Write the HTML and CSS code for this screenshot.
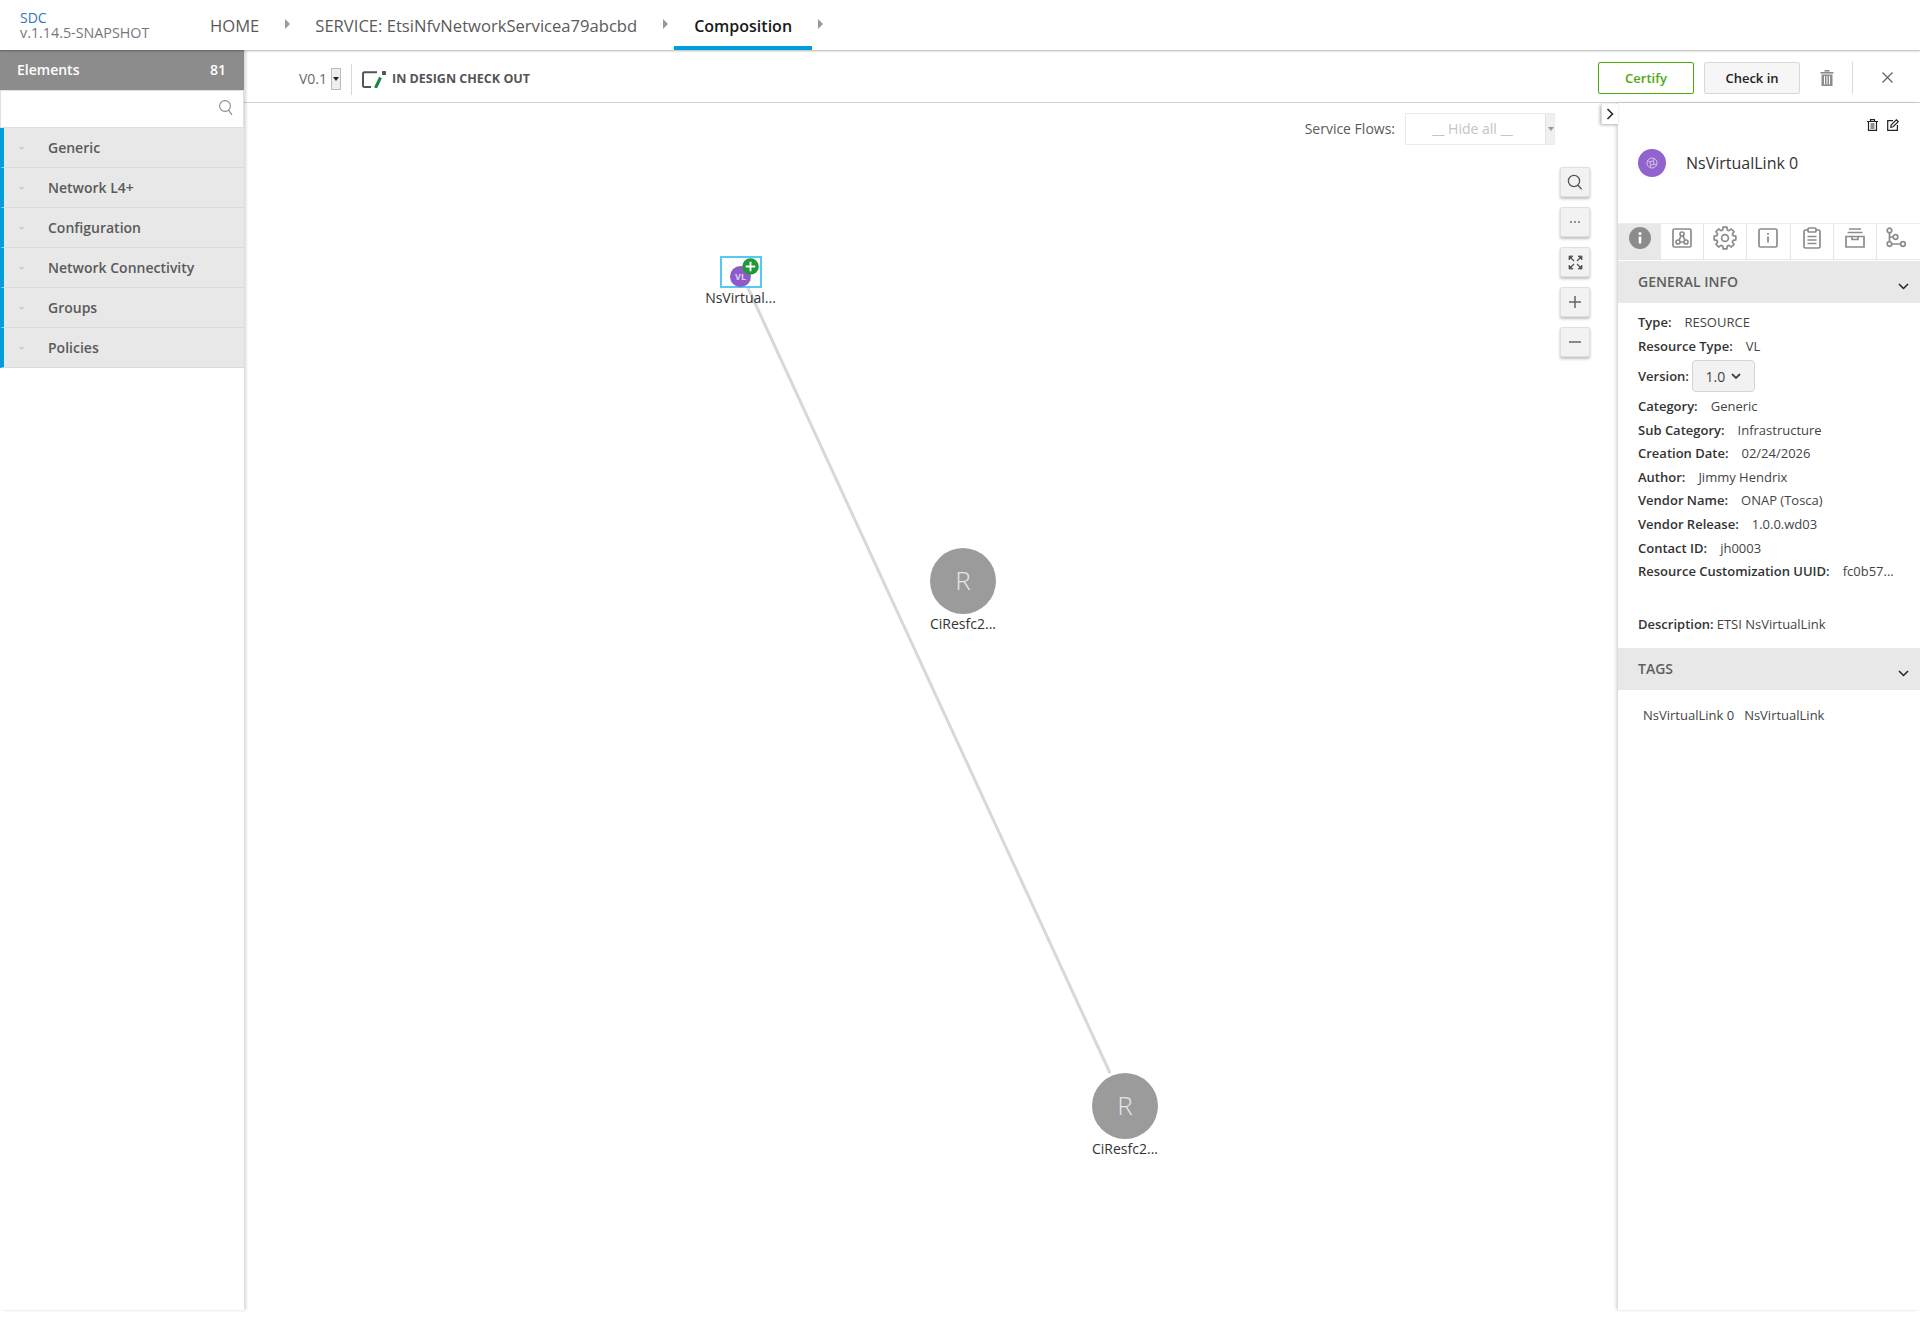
FILE: index.html
```html
<!DOCTYPE html>
<html lang="en">
<head>
    <meta charset="UTF-8">
    <title>SDC - Composition</title>
    <link rel="stylesheet" href="styles.css">
</head>
<body>

    <div class="top-bar">
        <div class="brand">
            <div class="brand-name">SDC</div>
            <div class="brand-version">v.1.14.5-SNAPSHOT</div>
        </div>
        <div class="crumb">HOME</div>
        <span class="crumb-arrow"></span>
        <div class="crumb crumb-service">SERVICE: EtsiNfvNetworkServicea79abcbd</div>
        <span class="crumb-arrow"></span>
        <div class="crumb crumb-active">Composition</div>
        <span class="crumb-arrow"></span>
    </div>

    <div class="main">
        <div class="palette">
            <div class="palette-head">
                <span>Elements</span>
                <span>81</span>
            </div>
            <div class="palette-search">
                <svg width="16" height="17" viewBox="0 0 16 17" fill="none" stroke="#8a8a8a" stroke-width="1.1"><circle cx="7" cy="7" r="5.4"/><path d="M10.6 11.2l3.4 4.6"/></svg>
            </div>
            <div class="group"><span class="group-mark"><svg width="5" height="4" viewBox="0 0 5 4" fill="none" stroke="#aaa"><path d="M.5 1l2 2 2-2"/></svg></span>Generic</div>
            <div class="group"><span class="group-mark"><svg width="5" height="4" viewBox="0 0 5 4" fill="none" stroke="#aaa"><path d="M.5 1l2 2 2-2"/></svg></span>Network L4+</div>
            <div class="group"><span class="group-mark"><svg width="5" height="4" viewBox="0 0 5 4" fill="none" stroke="#aaa"><path d="M.5 1l2 2 2-2"/></svg></span>Configuration</div>
            <div class="group"><span class="group-mark"><svg width="5" height="4" viewBox="0 0 5 4" fill="none" stroke="#aaa"><path d="M.5 1l2 2 2-2"/></svg></span>Network Connectivity</div>
            <div class="group"><span class="group-mark"><svg width="5" height="4" viewBox="0 0 5 4" fill="none" stroke="#aaa"><path d="M.5 1l2 2 2-2"/></svg></span>Groups</div>
            <div class="group"><span class="group-mark"><svg width="5" height="4" viewBox="0 0 5 4" fill="none" stroke="#aaa"><path d="M.5 1l2 2 2-2"/></svg></span>Policies</div>
        </div>

        <div class="workspace">
            <div class="toolbar">
                <div class="version">V0.1</div>
                <div class="mini-select"><span class="mini-caret"></span></div>
                <div class="toolbar-sep"></div>
                <svg class="state-icon" width="24" height="17" viewBox="0 0 24 17" fill="none">
                    <path d="M15 1.2H2.500a1.500 1.500 0 0 0-1.500 1.500v11.800a1.500 1.500 0 0 0 1.500 1.500H9" stroke="#555" stroke-width="2"/>
                    <path d="M18.500 6.500L13.500 17" stroke="#14883c" stroke-width="3"/>
                    <rect x="20" y="0" width="4" height="4" rx="0.500" fill="#555"/>
                </svg>
                <div class="state-text">IN DESIGN CHECK OUT</div>
                <div class="toolbar-right">
                    <button class="btn btn-certify">Certify</button>
                    <button class="btn btn-checkin">Check in</button>
                    <svg class="toolbar-trash" width="14" height="16" viewBox="0 0 14 16" fill="#8c8c8c"><rect x="0.500" y="2" width="13" height="1.600"/><rect x="4.500" y="0" width="5" height="1.600"/><path d="M1.500 4.500h11V16h-11zM4 6v8.500h1V6zm2.500 0v8.500h1V6zM9 6v8.500h1V6z" fill-rule="evenodd"/></svg>
                    <div class="toolbar-sep-right"></div>
                    <svg class="toolbar-close" width="11" height="11" viewBox="0 0 11 11" stroke="#666" stroke-width="1.300"><path d="M0.500 0.500l10 10M10.500 0.500l-10 10"/></svg>
                </div>
            </div>

            <div class="stage">
                <div class="canvas">
                    <svg class="links" width="1374" height="1206">
                        <line x1="504" y1="185" x2="866" y2="970" stroke="#d8d8d8" stroke-width="3"/>
                    </svg>

                    <div class="flows">
                        <span class="flows-label">Service Flows:</span>
                        <div class="flows-select">
                            <span class="flows-value">__ Hide all __</span>
                            <span class="flows-spin"></span>
                        </div>
                    </div>

                    <div class="zoom-tools">
                        <div class="zoom-btn"><svg width="16" height="17" viewBox="0 0 16 17" fill="none" stroke="#555" stroke-width="1.300"><circle cx="7" cy="7" r="5.600"/><path d="M11 11.300l3.600 4"/></svg></div>
                        <div class="zoom-btn"><svg width="12" height="4" viewBox="0 0 12 4" fill="#666"><circle cx="2" cy="2" r="0.900"/><circle cx="6" cy="2" r="0.900"/><circle cx="10" cy="2" r="0.900"/></svg></div>
                        <div class="zoom-btn"><svg width="15" height="15" viewBox="0 0 15 15" fill="#555" stroke="#555" stroke-width="1.300"><path d="M1 1h4L1 5zM14 1h-4l4 4zM1 14h4l-4-4zM14 14h-4l4-4z" stroke-width="0.800"/><path d="M2 2l4 4M13 2L9 6M2 13l4-4M13 13L9 9"/></svg></div>
                        <div class="zoom-btn"><svg width="14" height="14" viewBox="0 0 14 14" stroke="#666" stroke-width="1.500"><path d="M7 1v12M1 7h12"/></svg></div>
                        <div class="zoom-btn"><svg width="14" height="14" viewBox="0 0 14 14" stroke="#666" stroke-width="1.500"><path d="M1 7h12"/></svg></div>
                    </div>

                    <div class="node node-vl">
                        <div class="node-select"></div>
                        <div class="vl-dot">VL</div>
                        <svg class="vl-plus" width="17" height="17" viewBox="0 0 16 16"><circle cx="8" cy="8" r="7.800" fill="#1d9a35"/><path d="M8 3.500v9M3.500 8h9" stroke="#fff" stroke-width="1.800"/></svg>
                        <div class="node-label">NsVirtual...</div>
                    </div>
                    <div class="node node-r node-r1">
                        <div class="r-dot">R</div>
                        <div class="node-label">CiResfc2...</div>
                    </div>
                    <div class="node node-r node-r2">
                        <div class="r-dot">R</div>
                        <div class="node-label">CiResfc2...</div>
                    </div>
                </div>

                <div class="details">
                    <div class="details-toggle">
                        <svg width="8" height="12" viewBox="0 0 8 12" fill="none" stroke="#222" stroke-width="1.500"><path d="M1.500 1l5 5-5 5"/></svg>
                    </div>
                    <div class="details-actions">
                        <svg width="11" height="12" viewBox="0 0 11 12" fill="none" stroke="#222" stroke-width="1.200"><path d="M0 2.500h11M3.500 2V.7h4V2M1.500 2.500V11.400h8V2.500M3.500 5h4M3.500 7h4M3.500 9h4"/></svg>
                        <svg width="12" height="12" viewBox="0 0 12 12" fill="none" stroke="#222" stroke-width="1.200"><path d="M6 1.600H.7v9.700h9.700V6"/><path d="M3.800 8.200l.4-2.300L9.400.8l1.900 1.900-5.200 5.100z"/></svg>
                    </div>
                    <div class="details-title">
                        <div class="title-dot">
                            <svg width="16" height="16" viewBox="0 0 16 16" fill="none" stroke="#e0cdf0" stroke-width="0.900"><circle cx="8" cy="8" r="5"/><circle cx="8" cy="8" r="2"/><path d="M3.500 6l3 1M9.500 9l3 1M10 3.500L9 6.500M7 9.500l-1 3"/></svg>
                        </div>
                        <div class="title-text">NsVirtualLink 0</div>
                    </div>

                    <div class="tabs">
                        <div class="tab tab-active"><svg width="22" height="22" viewBox="0 0 22 22"><circle cx="11" cy="11" r="11" fill="#8c8c8c"/><rect x="9.700" y="9.500" width="2.600" height="7" fill="#fff"/><circle cx="11" cy="6.500" r="1.600" fill="#fff"/></svg></div>
                        <div class="tab"><svg width="20" height="20" viewBox="0 0 20 20" fill="none" stroke="#8c8c8c" stroke-width="1.700"><rect x="1" y="1" width="18" height="18" rx="1.500"/><circle cx="10" cy="6" r="2"/><circle cx="6" cy="14" r="2"/><circle cx="14" cy="14" r="2"/><path d="M9 8l-2 4.300M11 8l2 4.300M8 14h4"/></svg></div>
                        <div class="tab"><svg width="24" height="24" viewBox="0 0 24 24" fill="none" stroke="#8c8c8c" stroke-width="1.700" stroke-linejoin="round"><circle cx="12" cy="12" r="3.400"/><path d="M10.090 1.170L13.910 1.170L14.320 3.930L16.070 4.650L18.310 2.990L21.010 5.690L19.350 7.930L20.070 9.680L22.830 10.090L22.830 13.910L20.070 14.320L19.350 16.070L21.010 18.310L18.310 21.010L16.070 19.350L14.320 20.070L13.910 22.830L10.090 22.830L9.680 20.070L7.930 19.350L5.690 21.010L2.990 18.310L4.650 16.070L3.930 14.320L1.170 13.910L1.170 10.090L3.930 9.680L4.650 7.930L2.990 5.690L5.690 2.990L7.930 4.650L9.680 3.930Z"/></svg></div>
                        <div class="tab"><svg width="20" height="20" viewBox="0 0 20 20" fill="none" stroke="#8c8c8c" stroke-width="1.700"><rect x="1" y="1" width="18" height="18" rx="1.500"/><path d="M10 8.500v6" stroke-width="1.800"/><path d="M10 5v1.800" stroke-width="1.800"/></svg></div>
                        <div class="tab"><svg width="18" height="22" viewBox="0 0 18 22" fill="none" stroke="#8c8c8c" stroke-width="1.700"><path d="M5 3H2.500A1.500 1.500 0 0 0 1 4.500v15A1.500 1.500 0 0 0 2.500 21h13a1.500 1.500 0 0 0 1.500-1.500v-15A1.500 1.500 0 0 0 15.500 3H13"/><rect x="5" y="1" width="8" height="4" rx="1"/><path d="M4.500 9.500h9M4.500 13h9M4.500 16.500h9"/></svg></div>
                        <div class="tab"><svg width="20" height="20" viewBox="0 0 20 20" fill="none" stroke="#8c8c8c" stroke-width="1.700"><path d="M4 1h12M2.500 4.500h15"/><path d="M1 8.500h18v10.500H1zM7 8.500v3h6v-3"/></svg></div>
                        <div class="tab tab-last"><svg width="20" height="22" viewBox="0 0 20 22" fill="none" stroke="#8c8c8c" stroke-width="1.700"><circle cx="3.500" cy="3.500" r="2.300"/><circle cx="3.500" cy="17" r="2.300"/><circle cx="9.500" cy="10" r="2.300"/><circle cx="17" cy="17" r="2.300"/><path d="M3.500 6v8.700M3.500 10H7M6 17h8.700"/></svg></div>
                    </div>

                    <div class="section-head">
                        <span>GENERAL INFO</span>
                        <svg width="11" height="7" viewBox="0 0 11 7" fill="none" stroke="#222" stroke-width="1.500"><path d="M1 1l4.500 4.500L10 1"/></svg>
                    </div>
                    <div class="info">
                        <div class="info-row info-top"><b>Type:</b>RESOURCE</div>
                        <div class="info-row info-top"><b>Resource Type:</b>VL</div>
                        <div class="info-row info-version"><b>Version:</b>
                            <div class="version-select">1.0
                                <svg width="10" height="7" viewBox="0 0 10 7" fill="none" stroke="#444" stroke-width="1.800"><path d="M1 1l4 4 4-4"/></svg>
                            </div>
                        </div>
                        <div class="info-row"><b>Category:</b>Generic</div>
                        <div class="info-row"><b>Sub Category:</b>Infrastructure</div>
                        <div class="info-row"><b>Creation Date:</b>02/24/2026</div>
                        <div class="info-row"><b>Author:</b>Jimmy Hendrix</div>
                        <div class="info-row"><b>Vendor Name:</b>ONAP (Tosca)</div>
                        <div class="info-row"><b>Vendor Release:</b>1.0.0.wd03</div>
                        <div class="info-row"><b>Contact ID:</b>jh0003</div>
                        <div class="info-row"><b>Resource Customization UUID:</b>fc0b57...</div>
                        <div class="info-row info-desc"><b class="desc-label">Description:</b>ETSI NsVirtualLink</div>
                    </div>
                    <div class="section-head">
                        <span>TAGS</span>
                        <svg width="11" height="7" viewBox="0 0 11 7" fill="none" stroke="#222" stroke-width="1.500"><path d="M1 1l4.500 4.500L10 1"/></svg>
                    </div>
                    <div class="tag-list">
                        <span>NsVirtualLink 0</span>
                        <span>NsVirtualLink</span>
                    </div>
                </div>
            </div>
        </div>
    </div>

</body>
</html>
```

FILE: styles.css
```css
:root {
    --blue: #009fdb;
    --grey-bg: #e8e8e8;
    --text: #5a5a5a;
}

* {
    box-sizing: border-box;
}

body {
    margin: 0;
    height: 1319px;
    overflow: hidden;
    background: #fff;
    font-family: "Open Sans", sans-serif;
    color: var(--text);
    display: flex;
    flex-direction: column;
}

/* top bar */
.top-bar {
    height: 50px;
    flex-shrink: 0;
    display: flex;
    align-items: stretch;
    padding-left: 20px;
    background: #fff;
    box-shadow: 0 1px 2px rgba(0,0,0,0.3);
    position: relative;
    z-index: 3;
}
.brand {
    width: 190px;
    padding-top: 10px;
    font-size: 14px;
    line-height: 15px;
}
.brand-name {
    color: #2f78b8;
}
.brand-version {
    font-size: 14.300px;
    color: #777;
}
.crumb {
    font-size: 16.600px;
    padding: 16px 0 0;
    line-height: 20px;
    color: #5a5a5a;
}
.crumb-service {
    margin-left: -2px;
}
.crumb-arrow {
    width: 0;
    height: 0;
    margin: 19px 27px 0 26px;
    border-left: 5px solid #999;
    border-top: 5px solid transparent;
    border-bottom: 5px solid transparent;
}
.crumb-active {
    font-size: 16px;
    color: #191919;
    font-weight: 600;
    padding: 16px 20px 0;
    margin-left: -21px;
    margin-right: -20px;
    border-bottom: 4px solid var(--blue);
    height: 50px;
}

.main {
    flex: 1;
    display: flex;
    min-height: 0;
    margin-bottom: 9px;
}

/* palette */
.palette {
    width: 244px;
    flex-shrink: 0;
    box-shadow: 2px 0 3px rgba(0,0,0,0.16);
    position: relative;
    z-index: 2;
    background: #fff;
}
.palette-head {
    height: 40px;
    background: #8c8c8c;
    color: #fff;
    font-size: 14px;
    font-weight: 600;
    display: flex;
    align-items: center;
    justify-content: space-between;
    padding: 0 18px 1px 17px;
}
.palette-search {
    height: 38px;
    border: 1px solid #e0e0e0;
    display: flex;
    align-items: center;
    justify-content: flex-end;
    padding: 0 9px 3px 0;
}
.group {
    height: 40px;
    background: var(--grey-bg);
    border-left: 4px solid var(--blue);
    border-bottom: 1px solid #dcdcdc;
    display: flex;
    align-items: center;
    font-size: 14px;
    font-weight: 600;
    color: var(--text);
}
.group-mark {
    width: 44px;
    padding-left: 15px;
    display: flex;
    align-items: center;
}

/* toolbar */
.workspace {
    flex: 1;
    display: flex;
    flex-direction: column;
    min-width: 0;
}
.toolbar {
    height: 53px;
    flex-shrink: 0;
    display: flex;
    align-items: center;
    padding: 6px 27px 0 55px;
    border-bottom: 1px solid #d4d4d4;
}
.version {
    font-size: 14px;
    color: #6a6a6a;
    margin: -2px 4px 0 0;
}
.mini-select {
    width: 10px;
    height: 22px;
    margin-top: -1px;
    background: #eee;
    border: 1px solid #bbb;
    display: flex;
    align-items: center;
    justify-content: center;
}
.mini-caret {
    width: 0;
    height: 0;
    border-top: 4px solid #222;
    border-left: 3px solid transparent;
    border-right: 3px solid transparent;
}
.toolbar-sep {
    width: 1px;
    height: 31px;
    background: #d8d8d8;
    margin: 0 10px;
}
.state-icon {
    margin-right: 6px;
}
.state-text {
    font-size: 12.500px;
    font-weight: 700;
    color: #555;
    margin-top: -2px;
}
.toolbar-right {
    margin-left: auto;
    display: flex;
    align-items: center;
    margin-top: -3px;
}
.btn {
    width: 96px;
    height: 32px;
    border-radius: 2px;
    font-family: "Open Sans", sans-serif;
    font-size: 13px;
    font-weight: 600;
    padding: 0;
}
.btn-certify {
    background: #fff;
    border: 1px solid #4ca90c;
    color: #4ca90c;
    margin-right: 10px;
}
.btn-checkin {
    background: #f6f6f6;
    border: 1px solid #d8d8d8;
    color: #222;
}
.toolbar-trash {
    margin: 0 18px 0 20px;
}
.toolbar-sep-right {
    width: 1px;
    height: 32px;
    background: #d8d8d8;
    margin-right: 29px;
}

/* canvas */
.stage {
    flex: 1;
    display: flex;
    min-height: 0;
}
.canvas {
    flex: 1;
    position: relative;
    min-width: 0;
}
.links {
    position: absolute;
    left: 0;
    top: 0;
}
.flows {
    position: absolute;
    top: 10px;
    right: 63px;
    display: flex;
    align-items: center;
}
.flows-label {
    font-size: 14px;
    color: #5a5a5a;
    margin: -2px 10px 0 0;
}
.flows-select {
    width: 150px;
    height: 32px;
    border: 1px solid #ebebeb;
    display: flex;
    align-items: center;
    position: relative;
}
.flows-value {
    flex: 1;
    text-align: center;
    font-size: 14px;
    color: #c4c4c4;
    padding-right: 6px;
    margin-top: -2px;
}
.flows-spin {
    width: 9px;
    height: 30px;
    background: #f0f0f0;
    border-left: 1px solid #e4e4e4;
    position: relative;
}
.flows-spin::after {
    content: "";
    position: absolute;
    left: 2px;
    top: 13px;
    border-top: 4px solid #999;
    border-left: 3px solid transparent;
    border-right: 3px solid transparent;
}
.zoom-tools {
    position: absolute;
    top: 64px;
    right: 28px;
    display: flex;
    flex-direction: column;
    gap: 10px;
}
.zoom-btn {
    width: 30px;
    height: 30px;
    background: #f2f2f2;
    border: 1px solid #e0e0e0;
    border-radius: 2px;
    box-shadow: 0 2px 3px rgba(0,0,0,0.25);
    display: flex;
    align-items: center;
    justify-content: center;
}

/* diagram nodes */
.node {
    position: absolute;
}
.node-label {
    position: absolute;
    width: 100px;
    text-align: center;
    font-size: 14px;
    line-height: 18px;
    color: #333;
    white-space: nowrap;
}
.node-vl {
    left: 476px;
    top: 153px;
    width: 42px;
    height: 32px;
}
.node-select {
    position: absolute;
    inset: 0;
    border: 2px solid #55c9f5;
}
.vl-dot {
    position: absolute;
    left: 10px;
    top: 10px;
    width: 21px;
    height: 21px;
    border-radius: 50%;
    background: #8f5bc9;
    color: #e0d0f0;
    font-size: 9px;
    font-weight: 700;
    text-align: center;
    line-height: 21px;
}
.vl-plus {
    position: absolute;
    left: 22px;
    top: 2px;
}
.node-vl .node-label {
    left: -29.500px;
    top: 33px;
}
.node-r {
    width: 66px;
    height: 66px;
}
.node-r1 {
    left: 686px;
    top: 445px;
}
.node-r2 {
    left: 848px;
    top: 970px;
}
.r-dot {
    width: 66px;
    height: 66px;
    border-radius: 50%;
    background: #9b9b9b;
    color: #e6e6e6;
    font-size: 26px;
    font-weight: 300;
    text-align: center;
    line-height: 64px;
}
.node-r .node-label {
    left: -17px;
    top: 67px;
}

/* right panel */
.details {
    width: 302px;
    flex-shrink: 0;
    box-shadow: -2px 0 3px rgba(0,0,0,0.16);
    position: relative;
    background: #fff;
}
.details-toggle {
    position: absolute;
    left: -17px;
    top: 1px;
    width: 17px;
    height: 20px;
    background: #fff;
    border-left: 1px solid #ddd;
    box-shadow: -1px 1px 3px rgba(0,0,0,0.3);
    display: flex;
    align-items: center;
    justify-content: center;
}
.details-actions {
    display: flex;
    justify-content: flex-end;
    gap: 9px;
    padding: 16px 21px 0 0;
    height: 27px;
}
.details-title {
    height: 93px;
    display: flex;
    align-items: flex-start;
    padding: 19px 0 0 20px;
}
.title-dot {
    width: 28px;
    height: 28px;
    border-radius: 50%;
    background: #9063cd;
    display: flex;
    align-items: center;
    justify-content: center;
    margin-right: 20px;
}
.title-text {
    font-size: 16px;
    line-height: 28px;
    color: #333;
}
.tabs {
    display: grid;
    grid-template-columns: repeat(7, 1fr);
    height: 37px;
    border-top: 1px solid #ededed;
    border-bottom: 1px solid #e6e6e6;
}
.tab {
    border-right: 1px solid #e6e6e6;
    display: flex;
    justify-content: center;
    align-items: center;
    padding-bottom: 8px;
}
.tab-active {
    background: var(--grey-bg);
    border-right: 0;
}
.tab-last {
    border-right: 0;
}
.tab-last svg {
    margin-right: 4px;
}
.section-head {
    height: 42px;
    margin-top: 1px;
    background: var(--grey-bg);
    display: flex;
    justify-content: space-between;
    padding: 11px 11px 0 20px;
    font-size: 14px;
    font-weight: 600;
    color: #5f5f5f;
}
.section-head svg {
    margin-top: 11px;
}
.info {
    height: 344px;
    padding: 7px 0 0 20px;
    font-size: 13px;
    color: #444;
}
.info-row {
    height: 23.600px;
    line-height: 23.600px;
    white-space: nowrap;
}
.info-top {
    height: 24px;
    line-height: 24px;
}
.info-row b {
    font-weight: 600;
    color: #333;
    margin-right: 13px;
}
.info-version {
    height: 37px;
    line-height: 37px;
    display: flex;
    align-items: center;
}
.info-version b {
    margin-right: 3px;
}
.version-select {
    width: 63px;
    height: 32px;
    margin-top: -1px;
    background: #f2f2f2;
    border: 1px solid #d4d4d4;
    border-radius: 4px;
    font-size: 14px;
    display: flex;
    align-items: center;
    justify-content: center;
    gap: 6px;
}
.info-desc {
    margin-top: 29px;
}
.info-row .desc-label {
    margin-right: 3px;
}
.tag-list {
    padding: 15px 0 0 25px;
    font-size: 13px;
    line-height: 20px;
    color: #444;
    display: flex;
    gap: 10px;
}
```
